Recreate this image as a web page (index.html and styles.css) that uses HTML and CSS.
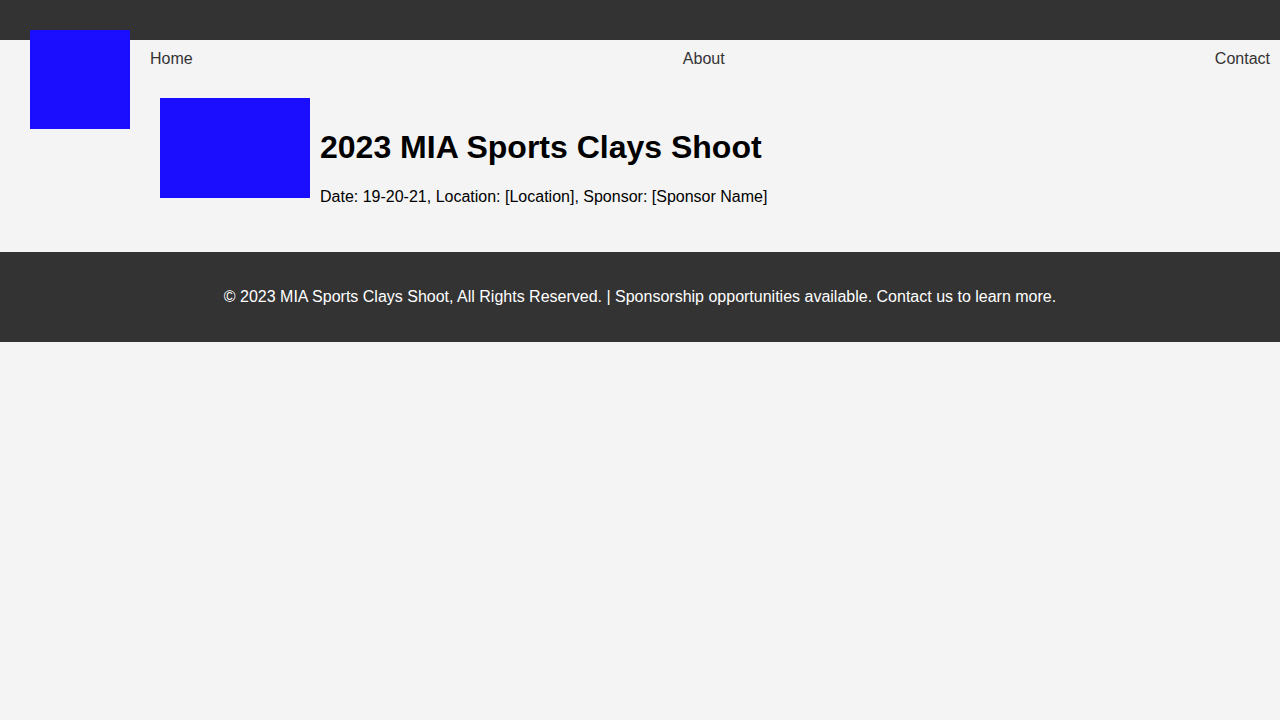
FILE: index.html
```html
<!DOCTYPE html>
<html lang="en">
<head>
<meta charset="utf-8">
<title>2023 MIA Sports Clays Shoot</title>
<link rel="stylesheet" href="styles.css">
</head>
<body>
<header class="topbar"></header>
<div class="logo" aria-label="MIA logo"></div>
<nav class="nav">
  <a href="#" class="nav-link">Home</a>
  <a href="#" class="nav-link">About</a>
  <a href="#" class="nav-link">Contact</a>
</nav>
<main class="main">
  <article class="event">
    <div class="event-img"></div>
    <div class="event-text">
      <h1 class="event-title">2023 MIA Sports Clays Shoot</h1>
      <p class="event-info">Date: 19-20-21, Location: [Location], Sponsor: [Sponsor Name]</p>
    </div>
  </article>
</main>
<footer class="footer">
  <p class="footer-text">© 2023 MIA Sports Clays Shoot, All Rights Reserved. | Sponsorship opportunities available. Contact us to learn more.</p>
</footer>
</body>
</html>
```
FILE: styles.css
```css
html, body {
  margin: 0;
  padding: 0;
}
body {
  background: #f4f4f4;
  font-family: "Liberation Sans", Arial, sans-serif;
  font-size: 16px;
  color: #000;
  position: relative;
}
.topbar {
  background: #333;
  height: 40px;
}
.logo {
  position: absolute;
  top: 30px;
  left: 30px;
  width: 100px;
  height: 99px;
  background: #1b0eff;
}
.nav {
  display: flex;
  justify-content: space-between;
  padding: 10px 10px 0 150px;
  line-height: 18px;
}
.nav-link {
  color: #333;
  text-decoration: none;
}
.main {
  padding: 30px 20px 46px 160px;
}
.event {
  display: flex;
  align-items: flex-start;
  gap: 10px;
}
.event-img {
  width: 150px;
  height: 100px;
  background: #1b0eff;
  flex: none;
}
.event-text {
  margin-top: 31px;
}
.event-title {
  font-size: 32px;
  font-weight: bold;
  line-height: 37px;
  margin: 0 0 22px;
}
.event-info {
  margin: 0;
  line-height: 18px;
}
.footer {
  background: #333;
  color: #fff;
  text-align: center;
  padding: 36px 0;
}
.footer-text {
  margin: 0;
  line-height: 18px;
}
```
